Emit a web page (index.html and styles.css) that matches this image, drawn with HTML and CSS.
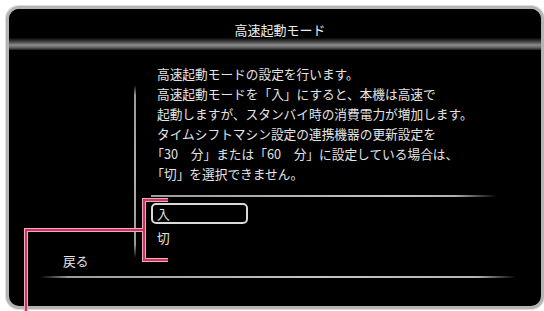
FILE: index.html
```html
<!DOCTYPE html>
<html lang="ja">
<head>
<meta charset="utf-8">
<title>高速起動モード</title>
<link rel="stylesheet" href="styles.css">
</head>
<body>
<div class="screen">
  <div class="panel">
    <div class="title">高速起動モード</div>
    <div class="body">
      <div class="rail"></div>
      <div class="main">
        <div class="desc">
          <div class="line">高速起動モードの設定を行います。</div>
          <div class="line">高速起動モードを「入」にすると、本機は高速で</div>
          <div class="line">起動しますが、スタンバイ時の消費電力が増加します。</div>
          <div class="line">タイムシフトマシン設定の連携機器の更新設定を</div>
          <div class="line hang">「30　分」または「60　分」に設定している場合は、</div>
          <div class="line hang">「切」を選択できません。</div>
        </div>
        <div class="sep"></div>
        <ul class="options">
          <li class="opt selected">入</li>
          <li class="opt">切</li>
        </ul>
      </div>
      <div class="back">戻る</div>
      <div class="bottomline"></div>
    </div>
  </div>
  <svg class="callout" width="544" height="311" viewBox="0 0 544 311">
    <g fill="none" stroke-linejoin="miter" stroke-linecap="butt">
      <path d="M168 194 H144 V254 H168 M144 224 H26 V311" stroke="#f2a9bf" stroke-width="4"/>
      <path d="M168 194 H144 V254 H168 M144 224 H26 V311" stroke="#c9345f" stroke-width="2"/>
    </g>
  </svg>
</div>
</body>
</html>
```
FILE: styles.css
```css
html, body {
  margin: 0;
  padding: 0;
  background: #fff;
  overflow: hidden;
}
.screen {
  position: relative;
  width: 544px;
  height: 311px;
  font-family: "Noto Sans CJK JP", "Noto Sans", sans-serif;
}
.panel {
  box-sizing: border-box;
  margin: 6px 0 0 6px;
  width: 538px;
  height: 303px;
  background: #000;
  border: 3px solid #b4b4b4;
  border-radius: 13px;
  box-shadow: 0 0 0 1px #dcdcdc;
  overflow: hidden;
}
.title {
  height: 41px;
  box-sizing: border-box;
  padding: 11px 0 0 10px;
  text-align: center;
  color: #ececec;
  font-size: 13px;
  line-height: 20px;
  background: linear-gradient(to bottom, #000 0, #000 70%, #444 80%, #8c8c8c 88%, #606060 94%, #1c1c1c 100%);
}
.body {
  display: grid;
  grid-template-columns: 125px 2px 1fr;
  grid-template-rows: auto auto auto;
}
.rail {
  grid-column: 2;
  grid-row: 1 / 3;
  align-self: start;
  margin-top: 35px;
  width: 2px;
  height: 173px;
  background: linear-gradient(to bottom, rgba(170,170,170,0) 0, #9a9a9a 6%, #b0b0b0 50%, #9a9a9a 92%, rgba(170,170,170,0) 100%);
}
.main {
  grid-column: 3;
  grid-row: 1;
  padding: 14px 0 0 15px;
  color: #e4e4e4;
  font-size: 12.7px;
}
.desc {
  padding-left: 6px;
}
.line {
  line-height: 20px;
  white-space: nowrap;
}
.hang {
  text-indent: -0.45em;
}
.sep {
  margin-top: 11px;
  width: 346px;
  height: 2px;
  background: linear-gradient(to right, #9c9c9c 0, #c4c4c4 70%, #b0b0b0 88%, rgba(160,160,160,0) 100%);
}
.options {
  list-style: none;
  margin: 6px 0 0 0;
  padding: 0;
}
.opt {
  box-sizing: border-box;
  width: 97px;
  padding-left: 6px;
  line-height: 20px;
  margin-top: 4px;
}
.opt.selected {
  margin-top: 0;
  height: 21px;
  line-height: 17px;
  padding-left: 4px;
  border: 2px solid #dadada;
  border-radius: 5px;
}
.back {
  grid-column: 1;
  grid-row: 2;
  margin-top: 3px;
  padding-left: 54px;
  color: #e6e6e6;
  font-size: 12.7px;
  line-height: 20px;
}
.bottomline {
  grid-column: 1 / -1;
  grid-row: 3;
  margin: 5px 0 0 31px;
  width: 476px;
  height: 2px;
  background: linear-gradient(to right, rgba(160,160,160,0) 0, #9c9c9c 6%, #c4c4c4 60%, #b4b4b4 92%, rgba(160,160,160,0) 100%);
}
.callout {
  position: absolute;
  left: 0;
  top: 0;
  pointer-events: none;
}
```
